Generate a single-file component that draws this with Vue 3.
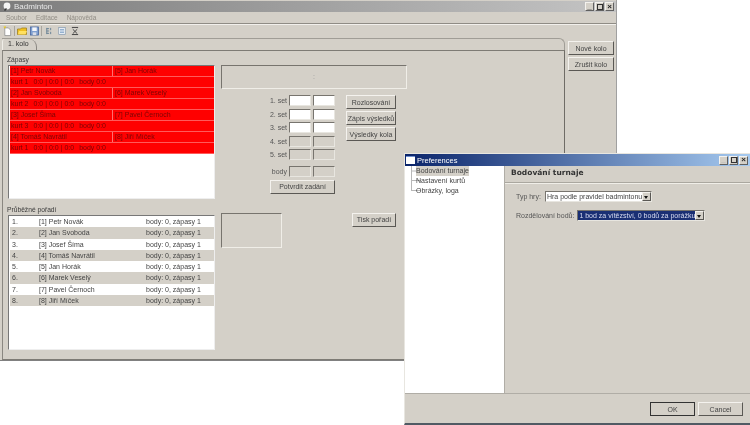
<template>
  <div class="desktop">
    <!-- Main window -->
    <div class="window main-win">
      <div class="titlebar inactive">
        <svg class="app-icon" width="10" height="10" viewBox="0 0 10 10">
          <circle cx="5" cy="4" r="3.4" fill="#f4f4f4" />
          <path d="M2 8l2-2 1 1-2 2z" fill="#333" />
        </svg>
        <span class="title-text">Badminton</span>
        <div class="win-btns">
          <span class="win-btn">_</span>
          <span class="win-btn"><i class="max-box"></i></span>
          <span class="win-btn close">×</span>
        </div>
      </div>
      <div class="menubar">
        <span v-for="m in menus" :key="m">{{ m }}</span>
      </div>
      <div class="toolbar">
        <svg width="9" height="11" viewBox="0 0 10 11">
          <path d="M2 1.500h4l2.500 2.500v6h-6.500z" fill="#fff" stroke="#888" stroke-width=".8" />
          <path d="M1 0l1 1.500 1-1.500" fill="none" stroke="#e8c820" stroke-width="1.200" />
        </svg>
        <i class="tool-sep"></i>
        <svg width="11" height="10" viewBox="0 0 11 10">
          <path d="M.5 3h3l1-1h5v6.500h-9z" fill="#f0c020" stroke="#a08020" stroke-width=".8" />
          <path d="M2 5h8l-1.500 3.500h-7.500z" fill="#ffe060" />
        </svg>
        <svg width="9" height="10" viewBox="0 0 10 10">
          <rect x=".5" y=".5" width="9" height="9" fill="#7f9fd0" stroke="#40609a" stroke-width=".8" />
          <rect x="2.500" y="1" width="5" height="4" fill="#f4f6fa" />
          <rect x="3" y="6.500" width="4" height="3" fill="#d8dde8" />
        </svg>
        <i class="tool-sep"></i>
        <svg class="tool-list" width="7" height="10" viewBox="0 0 9 10">
          <path d="M1 1v8M1 2h3M1 5h3M1 8h3M6 1v3M6 6v3" stroke="#50708a" stroke-width="1" fill="none" />
        </svg>
        <svg class="tool-next" width="8" height="10" viewBox="0 0 10 10">
          <rect x="1" y=".5" width="8" height="9" fill="#f0f4f8" stroke="#7890a8" stroke-width=".8" />
          <path d="M2.500 3h5M2.500 5h5M2.500 7h5" stroke="#5080b0" stroke-width=".8" />
        </svg>
        <svg class="tool-next" width="8" height="10" viewBox="0 0 9 10">
          <path d="M1 1h7M2 3l5 5M7 3l-5 5M1 9h7" stroke="#444" stroke-width="1.100" fill="none" />
        </svg>
      </div>
      <div class="work">
        <div class="tabs">
          <div class="tab-strip">
            <div class="tab">1. kolo</div>
          </div>
          <div class="panel">
            <div class="col-left">
              <div class="group-label first">Zápasy</div>
              <div class="list matches">
                <template v-for="m in matches" :key="m.id">
                  <div class="match-row">
                    <span class="match-a">{{ m.a }}</span>
                    <span class="match-b">{{ m.b }}</span>
                  </div>
                  <div class="match-row score">
                    <span>kurt {{ m.court }}</span>
                    <span>0:0 | 0:0 | 0:0</span>
                    <span>body 0:0</span>
                  </div>
                </template>
              </div>
              <div class="group-label second">Průběžné pořadí</div>
              <div class="list standings">
                <div v-for="(p, i) in players" :key="p" class="stand-row">
                  <span class="st-num">{{ i + 1 }}.</span>
                  <span class="st-name">[{{ i + 1 }}] {{ p }}</span>
                  <span>body: 0, zápasy 1</span>
                </div>
              </div>
            </div>
            <div class="col-center">
              <div class="scorebox">:</div>
              <div class="entry">
                <div class="sets">
                  <template v-for="s in sets" :key="s.label">
                    <span class="set-label" :class="{ gapped: s.gapped }">{{ s.label }}</span>
                    <i class="field" :class="{ off: s.off, gapped: s.gapped }"></i>
                    <i class="field" :class="{ off: s.off, gapped: s.gapped }"></i>
                  </template>
                  <button class="btn confirm">Potvrdit zadání</button>
                </div>
                <div class="actions">
                  <button class="btn">Rozlosování</button>
                  <button class="btn">Zápis výsledků</button>
                  <button class="btn">Výsledky kola</button>
                </div>
              </div>
              <div class="print-row">
                <div class="smallbox"></div>
                <button class="btn print">Tisk pořadí</button>
              </div>
            </div>
          </div>
        </div>
        <div class="side">
          <button class="btn">Nové kolo</button>
          <button class="btn">Zrušit kolo</button>
        </div>
      </div>
    </div>

    <!-- Preferences dialog -->
    <div class="window pref-win">
      <div class="titlebar active">
        <i class="pref-icon"></i>
        <span class="title-text">Preferences</span>
        <div class="win-btns">
          <span class="win-btn muted">_</span>
          <span class="win-btn"><i class="max-box"></i></span>
          <span class="win-btn close">×</span>
        </div>
      </div>
      <div class="pref-body">
        <div class="tree">
          <svg class="tree-lines" width="11" height="26" viewBox="0 0 11 26">
            <path d="M1.500 0v25M1.500 5h9.500M1.500 14.500h9.500M1.500 24.500h9.500" stroke="#b8b8b8" stroke-width="1" fill="none" />
          </svg>
          <div v-for="(t, i) in tree" :key="t" class="tree-item" :class="{ sel: i === 0 }">{{ t }}</div>
        </div>
        <div class="pref-main">
          <div class="pref-head">Bodování turnaje</div>
          <div class="form-row">
            <span>Typ hry:</span>
            <div class="combo wide-a">
              <span class="combo-text">Hra podle pravidel badmintonu</span>
              <i class="combo-arrow"></i>
            </div>
          </div>
          <div class="form-row">
            <span>Rozdělování bodů:</span>
            <div class="combo wide-b">
              <span class="combo-text picked">1 bod za vítězství, 0 bodů za porážku</span>
              <i class="combo-arrow"></i>
            </div>
          </div>
        </div>
      </div>
      <div class="pref-foot">
        <button class="btn ok">OK</button>
        <button class="btn">Cancel</button>
      </div>
    </div>
  </div>
</template>

<script setup>
const menus = ['Soubor', 'Editace', 'Nápověda']

const matches = [
  { id: 1, court: 1, a: '[1] Petr Novák', b: '[5] Jan Horák' },
  { id: 2, court: 2, a: '[2] Jan Svoboda', b: '[6] Marek Veselý' },
  { id: 3, court: 3, a: '[3] Josef Šíma', b: '[7] Pavel Černoch' },
  { id: 4, court: 1, a: '[4] Tomáš Navrátil', b: '[8] Jiří Míček' }
]

const players = [
  'Petr Novák',
  'Jan Svoboda',
  'Josef Šíma',
  'Tomáš Navrátil',
  'Jan Horák',
  'Marek Veselý',
  'Pavel Černoch',
  'Jiří Míček'
]

const sets = [
  { label: '1. set' },
  { label: '2. set' },
  { label: '3. set' },
  { label: '4. set', off: true },
  { label: '5. set', off: true },
  { label: 'body', off: true, gapped: true }
]

const tree = ['Bodování turnaje', 'Nastavení kurtů', 'Obrázky, loga']
</script>

<style>
html,
body {
  margin: 0;
  background: #fff;
}
</style>

<style scoped>
.desktop {
  position: relative;
  width: 750px;
  height: 425px;
  overflow: hidden;
  background: #fff;
  font-family: "Liberation Sans", Arial, sans-serif;
  font-size: 7px;
  color: #3a3a3a;
  filter: blur(0.2px);
}

.window {
  position: absolute;
  box-sizing: border-box;
  display: flex;
  flex-direction: column;
  background: #d4d0c8;
}

.main-win {
  left: 0;
  top: 0;
  width: 617px;
  height: 361px;
  padding-top: 1px;
  border-right: 1px solid #a0a0a0;
  border-bottom: 1px solid #808080;
}

.pref-win {
  left: 404px;
  top: 153px;
  width: 346px;
  height: 272px;
  border-top: 1px solid #e8e6e0;
  border-left: 1px solid #e8e6e0;
  border-bottom: 2px solid #505a64;
}

.titlebar {
  flex: none;
  display: flex;
  align-items: center;
  padding: 0 2px;
  color: #fff;
}

.titlebar.inactive {
  height: 11px;
  font-size: 8px;
  background: linear-gradient(90deg, #7c7c7c, #c4c4c4);
  color: #e8e8e8;
}

.titlebar.active {
  height: 12px;
  padding-left: 1px;
  font-size: 7.500px;
  background: linear-gradient(90deg, #0a246a, #a6caf0);
}

.app-icon {
  margin-right: 2px;
}

.pref-icon {
  width: 9px;
  height: 7px;
  margin-right: 2px;
  background: #fff;
  border-top: 1px solid #7090d0;
}

.win-btns {
  margin-left: auto;
  display: flex;
  gap: 1px;
}

.win-btn {
  box-sizing: border-box;
  width: 9px;
  height: 9px;
  display: flex;
  align-items: center;
  justify-content: center;
  background: #d4d0c8;
  border: 1px solid;
  border-color: #f4f2ee #606060 #606060 #f4f2ee;
  color: #222;
  font-size: 8px;
  line-height: 1;
  font-weight: bold;
}

.win-btn.muted {
  color: #aaa;
}

.max-box {
  box-sizing: border-box;
  width: 6px;
  height: 6px;
  border: 1px solid #333;
}

.menubar {
  flex: none;
  box-sizing: border-box;
  height: 12px;
  display: flex;
  align-items: center;
  gap: 9px;
  padding-left: 6px;
  border-bottom: 1px solid #8f8c85;
  box-shadow: 0 1px 0 #f2f0ec;
  color: #908c84;
  font-size: 6.500px;
}

.toolbar {
  flex: none;
  height: 14px;
  display: flex;
  align-items: center;
  gap: 2px;
  padding-left: 3px;
}

.tool-sep {
  width: 1px;
  height: 10px;
  background: #a8a59e;
}

.tool-list {
  margin-left: 2px;
}

.tool-next {
  margin-left: 3px;
}

.work {
  flex: 1;
  display: flex;
  min-height: 0;
}

.tabs {
  margin-left: 2px;
  width: 563px;
  display: flex;
  flex-direction: column;
}

.tab-strip {
  flex: none;
  box-sizing: border-box;
  height: 12px;
  display: flex;
  align-items: flex-end;
  border-top: 1px solid #a09d96;
  border-right: 1px solid #a09d96;
  border-top-right-radius: 6px;
}

.tab {
  box-sizing: border-box;
  width: 35px;
  height: 11px;
  line-height: 10px;
  padding-left: 5px;
  border-left: 1px solid #f0eee8;
  border-right: 1px solid #8a8781;
  border-radius: 3px 8px 0 0;
  color: #333;
}

.panel {
  flex: 1;
  box-sizing: border-box;
  display: flex;
  gap: 6px;
  min-height: 0;
  padding-left: 5px;
  border: 1px solid;
  border-color: #7e7b75 #6f6c66 #7e7b75 #8a8781;
}

.col-left {
  width: 207px;
  display: flex;
  flex-direction: column;
}

.group-label {
  height: 10px;
  line-height: 10px;
  margin-left: -1px;
  font-size: 6.700px;
}

.group-label.first {
  margin-top: 4px;
}

.group-label.second {
  margin-top: 6px;
}

.list {
  box-sizing: border-box;
  background: #fff;
  border: 1px solid;
  border-color: #777 #eee #eee #777;
  padding-left: 1px;
}

.matches {
  height: 134px;
}

.match-row {
  box-sizing: border-box;
  display: flex;
  height: 11px;
  line-height: 10px;
  padding-left: 1px;
  background: #f00;
  color: #7a0505;
  border-bottom: 1px solid #ff5a5a;
  white-space: nowrap;
}

.match-row.score {
  gap: 5px;
}

.match-a {
  width: 101px;
  border-right: 1px solid #ff7070;
}

.match-b {
  padding-left: 2px;
}

.standings {
  height: 135px;
}

.stand-row {
  display: flex;
  height: 11.300px;
  line-height: 11px;
  padding-left: 2px;
  color: #444;
}

.stand-row:nth-child(even) {
  background: #d4d0c8;
}

.st-num {
  width: 27px;
}

.st-name {
  width: 107px;
}

.col-center {
  display: flex;
  flex-direction: column;
  margin-top: 14px;
}

.scorebox {
  box-sizing: border-box;
  width: 186px;
  height: 24px;
  line-height: 22px;
  text-align: center;
  color: #999;
  border: 1px solid;
  border-color: #77746e #f0eee8 #f0eee8 #77746e;
}

.entry {
  display: flex;
  align-items: flex-start;
  margin-top: 6px;
}

.sets {
  display: grid;
  grid-template-columns: 66px 22px 22px;
  grid-auto-rows: 11px;
  column-gap: 2px;
  row-gap: 2.600px;
}

.set-label {
  text-align: right;
  line-height: 11px;
  color: #555;
}

.field {
  box-sizing: border-box;
  background: #fff;
  border: 1px solid;
  border-color: #77746e #e8e6e0 #e8e6e0 #77746e;
}

.field.off {
  background: #d4d0c8;
}

.set-label.gapped,
.field.gapped {
  margin-top: 3px;
  margin-bottom: -3px;
}

.actions {
  display: flex;
  flex-direction: column;
  gap: 2px;
  margin-left: 11px;
  width: 50px;
}

.btn {
  box-sizing: border-box;
  height: 14px;
  padding: 0;
  background: #d4d0c8;
  border: 1px solid;
  border-color: #f4f2ee #5a5854 #5a5854 #f4f2ee;
  font: inherit;
  color: #444;
  white-space: nowrap;
}

.confirm {
  grid-column: 2 / 4;
  justify-self: end;
  width: 65px;
  margin-top: 3px;
}

.print-row {
  display: flex;
  align-items: flex-start;
  margin-top: 25px;
}

.smallbox {
  box-sizing: border-box;
  width: 61px;
  height: 35px;
  border: 1px solid;
  border-color: #77746e #f0eee8 #f0eee8 #77746e;
}

.print {
  width: 44px;
  margin-left: 70px;
}

.side {
  display: flex;
  flex-direction: column;
  gap: 2px;
  margin: 3px 0 0 3px;
  width: 46px;
}

.pref-body {
  flex: 1;
  display: flex;
  min-height: 0;
}

.tree {
  position: relative;
  box-sizing: border-box;
  width: 100px;
  padding-left: 11px;
  background: #fff;
  border-right: 1px solid #b0ada6;
}

.tree-lines {
  position: absolute;
  left: 5px;
  top: 0;
}

.tree-item {
  position: relative;
  height: 10px;
  line-height: 10px;
  width: max-content;
  color: #444;
}

.tree-item.sel {
  background: #d4d0c8;
}

.pref-main {
  flex: 1;
  display: flex;
  flex-direction: column;
}

.pref-head {
  height: 16px;
  line-height: 13px;
  padding-left: 6px;
  font-family: "DejaVu Sans", sans-serif;
  font-size: 7.500px;
  font-weight: bold;
  color: #333;
  border-bottom: 1px solid #aaa79f;
  box-shadow: 0 1px 0 #f0eee8;
}

.form-row {
  display: flex;
  align-items: center;
  margin-top: 8px;
  padding-left: 11px;
  gap: 3px;
  color: #555;
}

.combo {
  box-sizing: border-box;
  height: 11px;
  display: flex;
  align-items: stretch;
  background: #fff;
  border: 1px solid;
  border-color: #77746e #e8e6e0 #e8e6e0 #77746e;
}

.wide-a {
  width: 107px;
  margin-left: 1px;
}

.wide-b {
  width: 128px;
}

.combo-text {
  flex: 1;
  min-width: 0;
  line-height: 9px;
  padding-left: 1px;
  color: #444;
  white-space: nowrap;
  overflow: hidden;
}

.combo-text.picked {
  background: #1a2f74;
  color: #d8dcf0;
}

.combo-arrow {
  position: relative;
  flex: none;
  box-sizing: border-box;
  width: 9px;
  background: #d4d0c8;
  border: 1px solid;
  border-color: #f4f2ee #5a5854 #5a5854 #f4f2ee;
}

.combo-arrow::after {
  content: "";
  position: absolute;
  left: 1px;
  top: 3px;
  border: 2.500px solid transparent;
  border-top: 3px solid #111;
  border-bottom: 0;
}

.pref-foot {
  flex: none;
  box-sizing: border-box;
  height: 30px;
  display: flex;
  justify-content: flex-end;
  gap: 3px;
  padding: 8px 7px 0 0;
  border-top: 1px solid #b0ada6;
}

.pref-foot .btn {
  width: 45px;
}

.pref-foot .ok {
  border-color: #333;
}
</style>
